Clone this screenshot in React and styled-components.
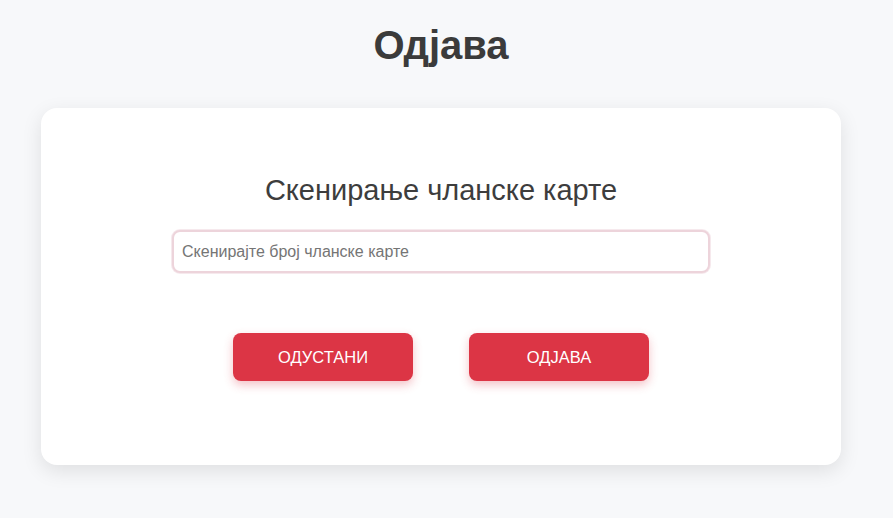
import React from "react";
import styled, { createGlobalStyle } from "styled-components";

const Global = createGlobalStyle`
  html, body {
    margin: 0;
    padding: 0;
    background: #f7f8fa;
    font-family: "Liberation Sans", Arial, sans-serif;
  }
`;

const Page = styled.div`
  width: 882px;
  display: flex;
  flex-direction: column;
  align-items: center;
  padding: 22px 0 40px;
`;

const Title = styled.h1`
  margin: 0;
  font-size: 40px;
  line-height: 46px;
  font-weight: 700;
  color: #3b3b3b;
`;

const Card = styled.div`
  margin-top: 40px;
  width: 800px;
  box-sizing: border-box;
  background: #fff;
  border-radius: 16px;
  box-shadow: 0 6px 20px rgba(0, 0, 0, 0.1);
  padding: 66px 0 84px;
  display: flex;
  flex-direction: column;
  align-items: center;
`;

const Subtitle = styled.h2`
  margin: 0;
  font-size: 29px;
  line-height: 32px;
  font-weight: 400;
  color: #3d3d3d;
`;

const Input = styled.input`
  margin-top: 24px;
  width: 538px;
  height: 43px;
  box-sizing: border-box;
  border: 2px solid #edd4db;
  box-shadow: 0 0 0 1px #f6e9ed;
  border-radius: 8px;
  padding: 0 8px;
  font-family: inherit;
  font-size: 16px;
  color: #333;
  outline: none;
  &::placeholder {
    color: #757575;
  }
`;

const Actions = styled.div`
  margin-top: 60px;
  display: flex;
  gap: 56px;
`;

const Button = styled.button`
  width: 180px;
  height: 48px;
  border: none;
  border-radius: 8px;
  background: #dc3545;
  color: #fff;
  font-family: inherit;
  font-size: 16.5px;
  text-transform: uppercase;
  box-shadow: 0 4px 10px rgba(220, 53, 69, 0.3);
  cursor: pointer;
`;

export default function App() {
  return (
    <>
      <Global />
      <Page>
        <Title>Одјава</Title>
        <Card>
          <Subtitle>Скенирање чланске карте</Subtitle>
          <Input autoFocus placeholder="Скенирајте број чланске карте" />
          <Actions>
            <Button>Одустани</Button>
            <Button>Одјава</Button>
          </Actions>
        </Card>
      </Page>
    </>
  );
}
